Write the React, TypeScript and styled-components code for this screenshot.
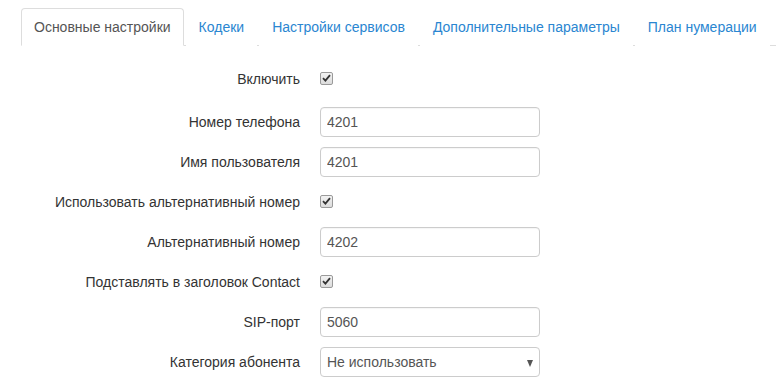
import React from "react";
import styled, { createGlobalStyle } from "styled-components";

const Global = createGlobalStyle`
  html, body { margin: 0; padding: 0; background: #fff; }
  body { font-family: "Liberation Sans", Arial, sans-serif; font-size: 14px; color: #333; }
  * { box-sizing: border-box; }
`;

const Page = styled.div`
  padding-top: 8px;
  width: 776px;
  height: 390px;
  overflow: hidden;
`;

const Tabs = styled.ul`
  display: flex;
  list-style: none;
  margin: 0 0 0 21px;
  padding: 0;
  border-bottom: 1px solid #ddd;
`;

const Tab = styled.li<{ $active?: boolean }>`
  margin: 0 2px -1px 0;
  padding: 8px 12px;
  line-height: 20px;
  border: 1px solid ${(p) => (p.$active ? "#ddd" : "transparent")};
  border-bottom-color: ${(p) => (p.$active ? "#fff" : "transparent")};
  border-radius: 4px 4px 0 0;
  background: #fff;
  color: ${(p) => (p.$active ? "#555" : "#2a86d1")};
  white-space: nowrap;
  cursor: pointer;
`;

const Form = styled.div`
  display: flex;
  flex-direction: column;
  padding-top: 18px;
`;

const Group = styled.div<{ $after: number }>`
  display: flex;
  align-items: center;
  gap: 20px;
  height: 30px;
  margin-bottom: ${(p) => p.$after}px;
`;

const Label = styled.label`
  width: 300px;
  text-align: right;
  color: #333;
  white-space: nowrap;
`;

const Input = styled.input`
  width: 220px;
  height: 30px;
  padding: 0 6px;
  border: 1px solid #ccc;
  border-radius: 4px;
  font: inherit;
  color: #555;
  outline: none;
  box-shadow: inset 0 1px 1px rgba(0, 0, 0, 0.04);
`;

const SelectBox = styled.div`
  position: relative;
  width: 220px;
  height: 30px;
  padding: 0 6px;
  border: 1px solid #ccc;
  border-radius: 4px;
  display: flex;
  align-items: center;
  color: #555;
`;

const Caret = styled.span`
  position: absolute;
  right: 6px;
  top: 12px;
  width: 0;
  height: 0;
  border-left: 3.5px solid transparent;
  border-right: 3.5px solid transparent;
  border-top: 7px solid #555;
`;

const Check = styled.span`
  display: inline-flex;
  align-items: center;
  justify-content: center;
  width: 13px;
  height: 13px;
  margin-top: -2px;
  border: 1px solid #9a9a9a;
  border-radius: 2px;
  background: linear-gradient(#f2f2f2, #dcdcdc);
`;

const CheckBox = () => (
  <Check>
    <svg width="9" height="8" viewBox="0 0 9 8">
      <path d="M1 4.2 L3.4 6.6 L8 1.2" fill="none" stroke="#333" strokeWidth="1.8" />
    </svg>
  </Check>
);

const tabs = ["Основные настройки", "Кодеки", "Настройки сервисов", "Дополнительные параметры", "План нумерации"];

type Row = { label: string; kind: "check" | "input" | "select"; value?: string };
const rows: Row[] = [
  { label: "Включить", kind: "check" },
  { label: "Номер телефона", kind: "input", value: "4201" },
  { label: "Имя пользователя", kind: "input", value: "4201" },
  { label: "Использовать альтернативный номер", kind: "check" },
  { label: "Альтернативный номер", kind: "input", value: "4202" },
  { label: "Подставлять в заголовок Contact", kind: "check" },
  { label: "SIP-порт", kind: "input", value: "5060" },
  { label: "Категория абонента", kind: "select", value: "Не использовать" },
];

export default function App() {
  return (
    <Page>
      <Global />
      <Tabs>
        {tabs.map((t, i) => (
          <Tab key={t} $active={i === 0}>{t}</Tab>
        ))}
      </Tabs>
      <Form>
        {rows.map((r, i) => (
          <Group key={r.label} $after={i === 0 ? 13 : 10}>
            <Label>{r.label}</Label>
            {r.kind === "check" && <CheckBox />}
            {r.kind === "input" && <Input defaultValue={r.value} />}
            {r.kind === "select" && (
              <SelectBox>
                {r.value}
                <Caret />
              </SelectBox>
            )}
          </Group>
        ))}
      </Form>
    </Page>
  );
}
